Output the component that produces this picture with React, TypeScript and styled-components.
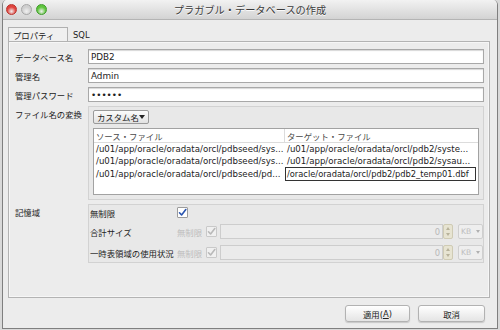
import React from 'react';
import styled, { createGlobalStyle } from 'styled-components';

const GlobalStyle = createGlobalStyle`
  html, body {
    margin: 0;
    padding: 0;
  }
  body {
    width: 500px;
    height: 330px;
    overflow: hidden;
    background: #d9d9d9;
    font-family: "DejaVu Sans", "Noto Sans CJK JP", sans-serif;
    font-size: 8.4px;
    color: #222;
  }
`;

const Window = styled.div`
  box-sizing: border-box;
  width: 496px;
  height: 329px;
  margin-left: 2px;
  display: flex;
  flex-direction: column;
  background: #ececec;
  border: 1px solid #7f7f7f;
  border-top: none;
  border-radius: 5px 5px 0 0;
  overflow: hidden;
`;

const TitleBar = styled.div`
  height: 20px;
  flex: none;
  display: grid;
  grid-template-columns: 1fr auto 1fr;
  align-items: center;
  padding: 0 3px;
  background: linear-gradient(#f2f2f2, #d3d3d3);
  border-bottom: 1px solid #b4b4b4;
  box-sizing: border-box;
`;

const Lights = styled.div`
  display: flex;
  gap: 4px;
`;

const Light = styled.span<{ $color: string; $edge: string }>`
  width: 11px;
  height: 11px;
  border-radius: 50%;
  box-sizing: border-box;
  border: 1px solid ${(p) => p.$edge};
  background: radial-gradient(circle at 50% 70%, #fff8 0, ${(p) => p.$color} 55%);
`;

const Title = styled.div`
  font-size: 10.2px;
  color: #3b3b3b;
  text-shadow: 0 1px 0 #fafafa;
`;

const Body = styled.div`
  flex: 1;
  display: flex;
  flex-direction: column;
  padding: 7px 7px 0 5px;
`;

const TabBar = styled.div`
  display: flex;
  align-items: flex-end;
  height: 14px;
`;

const Tab = styled.div<{ $active?: boolean }>`
  box-sizing: border-box;
  height: 14px;
  display: flex;
  align-items: center;
  padding: 0 4px;
  width: ${(p) => (p.$active ? '60px' : 'auto')};
  border: ${(p) => (p.$active ? '1px solid #b0b0b0' : '1px solid transparent')};
  border-bottom: none;
  background: ${(p) => (p.$active ? '#f0f0f0' : 'transparent')};
`;

const Panel = styled.div`
  box-sizing: border-box;
  height: 257px;
  border: 1px solid #b3b3b3;
  box-shadow: inset 0 0 0 1px #f6f6f6;
  padding: 7px 5px 0 6px;
`;

const Form = styled.div`
  display: grid;
  grid-template-columns: 73px 1fr;
  row-gap: 4px;
`;

const Label = styled.div<{ $top?: boolean }>`
  display: flex;
  align-items: ${(p) => (p.$top ? 'flex-start' : 'center')};
  padding-top: ${(p) => (p.$top ? '2px' : '0')};
  color: #222;
  white-space: nowrap;
`;

const Field = styled.div`
  box-sizing: border-box;
  height: 15px;
  display: flex;
  align-items: center;
  padding-left: 2px;
  background: #fff;
  border: 1px solid #a8a8a8;
  box-shadow: inset 0 1px 1px #d8d8d8;
  font-size: 8.8px;
`;

const Group = styled.div`
  box-sizing: border-box;
  border: 1px solid #d2d2d2;
  background: #e8e8e8;
`;

const FileGroup = styled(Group)`
  height: 94px;
  padding: 3px 4px 0 4px;
  display: flex;
  flex-direction: column;
  align-items: flex-start;
`;

const Combo = styled.div`
  box-sizing: border-box;
  height: 14px;
  width: 56px;
  display: flex;
  align-items: center;
  justify-content: space-between;
  padding: 0 3px;
  white-space: nowrap;
  border: 1px solid #9a9a9a;
  border-radius: 2px;
  background: linear-gradient(#fbfbfb, #e2e2e2);
`;

const Arrow = styled.span<{ $dim?: boolean }>`
  width: 0;
  height: 0;
  border-left: 3px solid transparent;
  border-right: 3px solid transparent;
  border-top: 4px solid ${(p) => (p.$dim ? '#b0b0b0' : '#222')};
`;

const Table = styled.div`
  box-sizing: border-box;
  margin-top: 4px;
  width: 100%;
  height: 67px;
  background: #fff;
  border: 1px solid #a2a2a2;
  display: grid;
  grid-template-columns: 191px 1fr;
  grid-auto-rows: min-content;
`;

const HeadCell = styled.div<{ $first?: boolean }>`
  height: 13px;
  display: flex;
  align-items: center;
  padding-left: 2px;
  color: #4a4a4a;
  border-bottom: 1px solid #dcdcdc;
  border-right: ${(p) => (p.$first ? '1px solid #dcdcdc' : 'none')};
`;

const Cell = styled.div<{ $editing?: boolean; $tall?: boolean }>`
  box-sizing: border-box;
  height: ${(p) => (p.$tall ? '14px' : '12px')};
  display: flex;
  align-items: center;
  padding-left: ${(p) => (p.$editing ? '1px' : '2px')};
  white-space: nowrap;
  overflow: hidden;
  font-size: ${(p) => (p.$editing ? '8.3px' : '8.6px')};
  border: ${(p) => (p.$editing ? '1px solid #333' : 'none')};
  margin-right: ${(p) => (p.$editing ? '2px' : '0')};
`;

const StoreGroup = styled(Group)`
  height: 59px;
  padding: 1px 0 0 1px;
  display: flex;
  flex-direction: column;
`;

const StoreRow = styled.div<{ $h: number; $mt?: number }>`
  display: flex;
  align-items: center;
  height: ${(p) => p.$h}px;
  margin-top: ${(p) => p.$mt ?? 0}px;
`;

const StoreLabel = styled.div`
  width: 87px;
  white-space: nowrap;
  flex: none;
`;

const DimText = styled.span`
  color: #bdbdbd;
  width: 29px;
  flex: none;
`;

const Check = styled.span<{ $dim?: boolean }>`
  box-sizing: border-box;
  width: 11px;
  height: 11px;
  flex: none;
  display: flex;
  align-items: center;
  justify-content: center;
  background: ${(p) => (p.$dim ? '#f0f0f0' : '#fff')};
  border: 1px solid ${(p) => (p.$dim ? '#c9c9c9' : '#9c9c9c')};
  border-radius: 1px;
`;

const DimField = styled.div`
  box-sizing: border-box;
  margin-left: 3px;
  width: 223px;
  height: 15px;
  display: flex;
  align-items: center;
  justify-content: flex-end;
  padding-right: 2px;
  color: #b8b8b8;
  background: #ebebeb;
  border: 1px solid #cdcdcd;
`;

const Spinner = styled.div`
  box-sizing: border-box;
  width: 10px;
  height: 15px;
  display: flex;
  flex-direction: column;
  align-items: center;
  justify-content: space-around;
  background: #e7e4d2;
  border: 1px solid #cfcbb4;
  border-radius: 2px;
`;

const SpinUp = styled.span`
  border-left: 2px solid transparent;
  border-right: 2px solid transparent;
  border-bottom: 3px solid #b7b29a;
`;

const SpinDown = styled.span`
  border-left: 2px solid transparent;
  border-right: 2px solid transparent;
  border-top: 3px solid #b7b29a;
`;

const UnitCombo = styled.div`
  box-sizing: border-box;
  margin-left: 5px;
  width: 25px;
  height: 15px;
  display: flex;
  align-items: center;
  justify-content: space-between;
  padding: 0 2px 0 2px;
  color: #bdbdbd;
  font-size: 7.6px;
  border: 1px solid #cfcfcf;
  border-radius: 2px;
  background: #eeeeee;

  ${Arrow} {
    border-left-width: 2.5px;
    border-right-width: 2.5px;
    border-top-width: 3px;
  }
`;

const Buttons = styled.div`
  display: flex;
  justify-content: flex-end;
  gap: 8px;
  margin-top: 7px;
  padding-right: 5px;
`;

const Button = styled.div<{ $w: number }>`
  box-sizing: border-box;
  width: ${(p) => p.$w}px;
  height: 17px;
  display: flex;
  align-items: center;
  justify-content: center;
  border: 1px solid #b2b2b2;
  border-radius: 3px;
  background: linear-gradient(#ffffff, #e4e4e4);
  box-shadow: 0 1px 1px #c8c8c8;
  color: #222;
`;

const CheckMark = ({ dim }: { dim?: boolean }) => (
  <svg width="9" height="9" viewBox="0 0 9 9">
    <path
      d="M1.5 4.8 L3.6 7 L7.8 1.5"
      fill="none"
      stroke={dim ? '#b9b9b9' : '#2a55b0'}
      strokeWidth="1.6"
      strokeLinecap="round"
      strokeLinejoin="round"
    />
  </svg>
);

const rows = [
  {
    src: '/u01/app/oracle/oradata/orcl/pdbseed/sys...',
    dst: '/u01/app/oracle/oradata/orcl/pdb2/syste...',
  },
  {
    src: '/u01/app/oracle/oradata/orcl/pdbseed/sys...',
    dst: '/u01/app/oracle/oradata/orcl/pdb2/sysau...',
  },
  {
    src: '/u01/app/oracle/oradata/orcl/pdbseed/pd...',
    dst: '/oracle/oradata/orcl/pdb2/pdb2_temp01.dbf',
    editing: true,
  },
];

const SizeRow = ({ label, mt }: { label: string; mt: number }) => (
  <StoreRow $h={15} $mt={mt}>
    <StoreLabel>{label}</StoreLabel>
    <DimText>無制限</DimText>
    <Check $dim>
      <CheckMark dim />
    </Check>
    <DimField>0</DimField>
    <Spinner>
      <SpinUp />
      <SpinDown />
    </Spinner>
    <UnitCombo>
      KB <Arrow $dim />
    </UnitCombo>
  </StoreRow>
);

export default function App() {
  return (
    <>
      <GlobalStyle />
      <Window>
        <TitleBar>
          <Lights>
            <Light $color="#e0443e" $edge="#b8322c" />
            <Light $color="#cfcfcf" $edge="#a6a6a6" />
            <Light $color="#5fc43d" $edge="#3e9a2a" />
          </Lights>
          <Title>プラガブル・データベースの作成</Title>
          <div />
        </TitleBar>
        <Body>
          <TabBar>
            <Tab $active>プロパティ</Tab>
            <Tab>SQL</Tab>
          </TabBar>
          <Panel>
            <Form>
              <Label>データベース名</Label>
              <Field>PDB2</Field>
              <Label>管理名</Label>
              <Field>Admin</Field>
              <Label>管理パスワード</Label>
              <Field>••••••</Field>
              <Label $top>ファイル名の変換</Label>
              <FileGroup>
                <Combo>
                  カスタム名 <Arrow />
                </Combo>
                <Table>
                  <HeadCell $first>ソース・ファイル</HeadCell>
                  <HeadCell>ターゲット・ファイル</HeadCell>
                  {rows.map((r, key) => (
                    <React.Fragment key={key}>
                      <Cell $tall={r.editing}>{r.src}</Cell>
                      <Cell $tall={r.editing} $editing={r.editing}>
                        {r.dst}
                      </Cell>
                    </React.Fragment>
                  ))}
                </Table>
              </FileGroup>
              <Label $top>記憶域</Label>
              <StoreGroup>
                <StoreRow $h={13}>
                  <StoreLabel>無制限</StoreLabel>
                  <Check>
                    <CheckMark />
                  </Check>
                </StoreRow>
                <SizeRow label="合計サイズ" mt={5} />
                <SizeRow label="一時表領域の使用状況" mt={6} />
              </StoreGroup>
            </Form>
          </Panel>
          <Buttons>
            <Button $w={65}>
              適用(<u>A</u>)
            </Button>
            <Button $w={67}>取消</Button>
          </Buttons>
        </Body>
      </Window>
    </>
  );
}
